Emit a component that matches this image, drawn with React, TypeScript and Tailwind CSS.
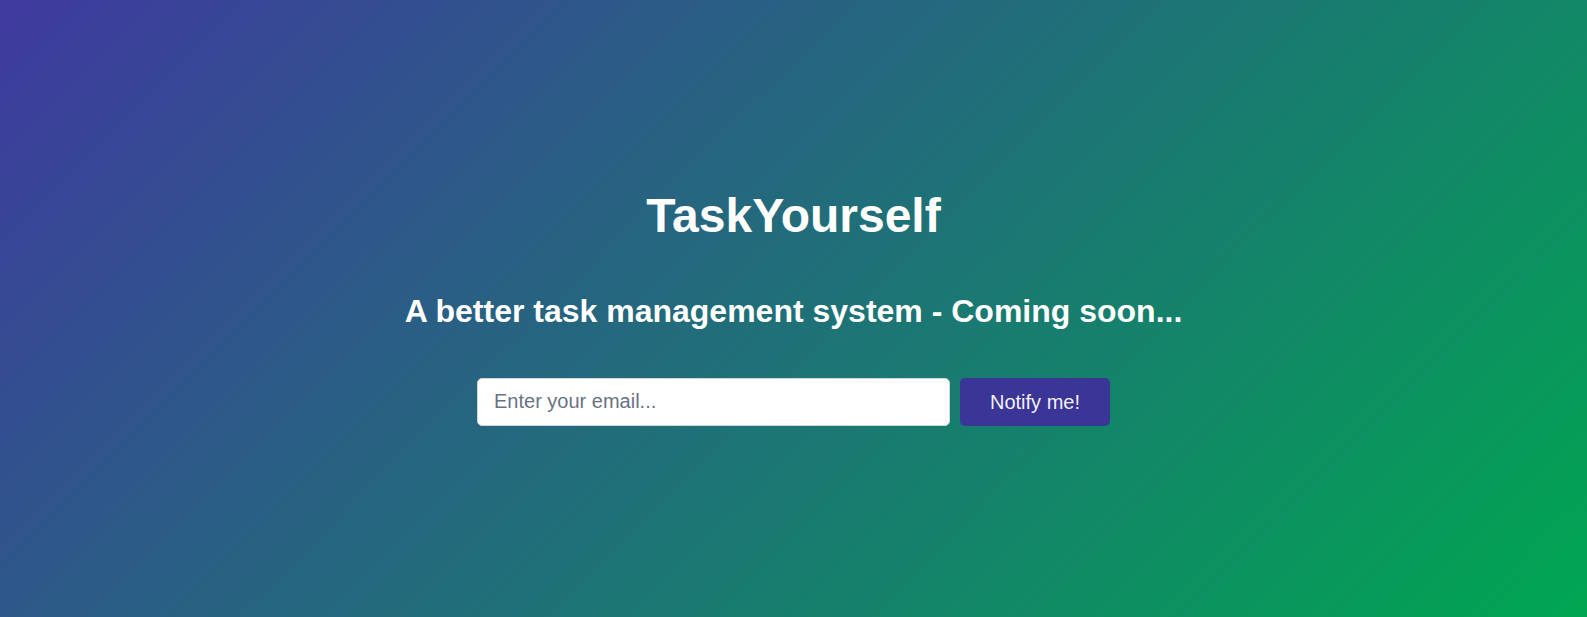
import { useState } from 'react';

const App = () => {
    const [email, setEmail] = useState('');

    return (
        <div className="min-h-screen w-full flex flex-col items-center justify-center bg-[linear-gradient(135deg,#3f3a9f,#00a651)] font-['Liberation_Sans',Arial,sans-serif] text-white">
            <h1 className="text-5xl font-bold leading-none">TaskYourself</h1>
            <h2 className="mt-[53px] text-[32px] font-bold leading-9">A better task management system - Coming soon...</h2>
            <form className="mt-[49px] flex gap-2.5" onSubmit={e => e.preventDefault()}>
                <input
                    type="email"
                    placeholder="Enter your email..."
                    value={email}
                    onChange={e => setEmail(e.target.value)}
                    className="w-[473px] h-12 px-4 rounded-[5px] border border-gray-300 bg-white text-xl text-gray-800 placeholder:text-gray-500 outline-none"
                />
                <button type="submit" className="h-12 px-[30px] rounded-[5px] bg-[#3a3597] text-xl text-white/95">
                    Notify me!
                </button>
            </form>
        </div>
    );
};

export default App;
